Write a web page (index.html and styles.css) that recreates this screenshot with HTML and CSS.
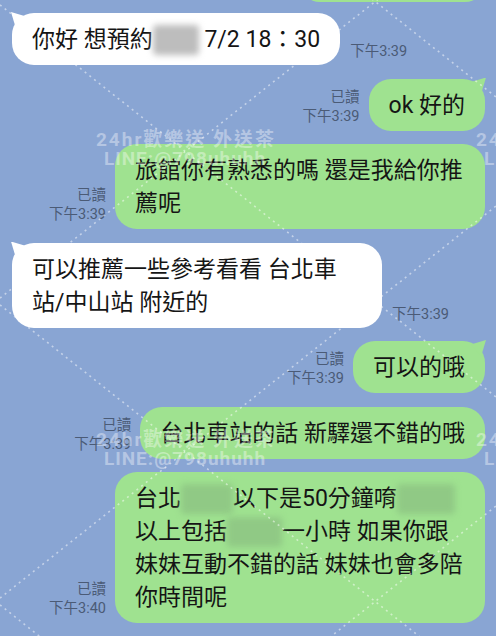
FILE: index.html
```html
<!DOCTYPE html>
<html>
  <head>
    <meta charset="utf-8">
    <title>LINE</title>
    <link rel="stylesheet" href="styles.css">
  </head>
  <body>
    <div class="screen">
      <div class="chat">
        <div class="row out prev"><div class="bubble green"></div></div>

        <div class="row in">
          <div class="bubble white tail">你好 想預約<span class="blur gray"></span> 7/2 18：30</div>
          <div class="time">下午3:39</div>
        </div>

        <div class="row out">
          <div class="meta"><span>已讀</span><span>下午3:39</span></div>
          <div class="bubble green tail">ok 好的</div>
        </div>

        <div class="row out">
          <div class="meta"><span>已讀</span><span>下午3:39</span></div>
          <div class="bubble green wide">旅館你有熟悉的嗎 還是我給你推<br>薦呢</div>
        </div>

        <div class="row in">
          <div class="bubble white tail wide">可以推薦一些參考看看 台北車<br>站/中山站 附近的</div>
          <div class="time">下午3:39</div>
        </div>

        <div class="row out">
          <div class="meta"><span>已讀</span><span>下午3:39</span></div>
          <div class="bubble green tail">可以的哦</div>
        </div>

        <div class="row out">
          <div class="meta"><span>已讀</span><span>下午3:39</span></div>
          <div class="bubble green">台北車站的話 新驛還不錯的哦</div>
        </div>

        <div class="row out">
          <div class="meta"><span>已讀</span><span>下午3:40</span></div>
          <div class="bubble green wide">台北<span class="blur leaf w52"></span>以下是50分鐘唷<span class="blur leaf w58"></span><br>以上包括<span class="blur leaf w55"></span>一小時 如果你跟<br>妹妹互動不錯的話 妹妹也會多陪<br>你時間呢</div>
        </div>
      </div>

      <svg class="overlay" width="496" height="636" viewBox="0 0 496 636">
        <g class="dots">
          <line x1="0" y1="-295" x2="496" y2="97"/>
          <line x1="0" y1="5" x2="496" y2="397"/>
          <line x1="0" y1="305" x2="496" y2="697"/>
          <line x1="0" y1="605" x2="496" y2="997"/>
          <line x1="0" y1="298" x2="496" y2="-94"/>
          <line x1="0" y1="598" x2="496" y2="206"/>
          <line x1="0" y1="898" x2="496" y2="506"/>
        </g>
        <g class="mark">
          <text x="186" y="146">24hr歡樂送 外送茶</text>
          <text x="185" y="165" class="id">LINE:@798uhuhh</text>
          <text x="566" y="146">24hr歡樂送 外送茶</text>
          <text x="565" y="165" class="id">LINE:@798uhuhh</text>
          <text x="186" y="446">24hr歡樂送 外送茶</text>
          <text x="185" y="465" class="id">LINE:@798uhuhh</text>
          <text x="566" y="446">24hr歡樂送 外送茶</text>
          <text x="565" y="465" class="id">LINE:@798uhuhh</text>
        </g>
      </svg>
    </div>
  </body>
</html>
```

FILE: styles.css
```css
body {
  margin: 0;
  background: #89a5d3;
  font-family: Roboto, "Noto Sans CJK TC", sans-serif;
}

.screen {
  position: relative;
  width: 496px;
  height: 636px;
  overflow: hidden;
}

/* message list */
.chat {
  display: flex;
  flex-direction: column;
  gap: 13.5px;
  padding: 0 11px 0 12px;
}

.row {
  display: flex;
  align-items: flex-end;
}

.row.out {
  justify-content: flex-end;
}

/* bottom edge of the previous message, scrolled off the top */
.prev {
  margin-top: -38.5px;
  margin-bottom: -2px;
}

.prev .bubble {
  width: 185px;
  height: 40px;
  padding: 0;
}

.bubble {
  position: relative;
  box-sizing: border-box;
  max-width: 370px;
  padding: 10px 20px 9px;
  border-radius: 22px;
  font-size: 23px;
  line-height: 33px;
  color: #151515;
  white-space: nowrap;
}

.bubble.wide {
  width: 370px;
}

.white {
  background: #ffffff;
}

.green {
  background: #9fe290;
}

.tail::before {
  content: "";
  position: absolute;
  top: -1px;
  width: 16px;
  height: 16px;
  background: inherit;
}

.white.tail::before {
  left: -1px;
  clip-path: polygon(0 0, 100% 30%, 30% 100%);
}

.green.tail::before {
  right: -1px;
  clip-path: polygon(100% 0, 70% 100%, 0 30%);
}

/* hidden (blurred) words */
.blur {
  display: inline-block;
  vertical-align: top;
  height: 30px;
  margin-top: 2px;
  border-radius: 4px;
  filter: blur(3px);
}

.blur.gray {
  width: 46px;
  background: #bdbdbd;
}

.blur.leaf {
  background: #90c985;
}

.w52 { width: 52px; }
.w55 { width: 55px; }
.w58 { width: 58px; }

/* read marks and times */
.time,
.meta {
  font-size: 14.5px;
  line-height: 19px;
  color: #4b5b76;
  white-space: nowrap;
}

.time {
  margin-left: 10px;
  padding-bottom: 4px;
}

.meta {
  display: flex;
  flex-direction: column;
  align-items: flex-end;
  margin-right: 9px;
  padding-bottom: 5px;
}

/* watermark laid over the screenshot */
.overlay {
  position: absolute;
  top: 0;
  left: 0;
  pointer-events: none;
}

.dots line {
  stroke: #ffffff;
  stroke-opacity: 0.5;
  stroke-width: 1.6;
  stroke-dasharray: 2 4;
}

.mark text {
  fill: #ffffff;
  fill-opacity: 0.38;
  font-family: Roboto, "Noto Sans CJK TC", sans-serif;
  font-weight: 700;
  font-size: 19px;
  letter-spacing: 2px;
  text-anchor: middle;
}

.mark text.id {
  letter-spacing: 1px;
}
```
